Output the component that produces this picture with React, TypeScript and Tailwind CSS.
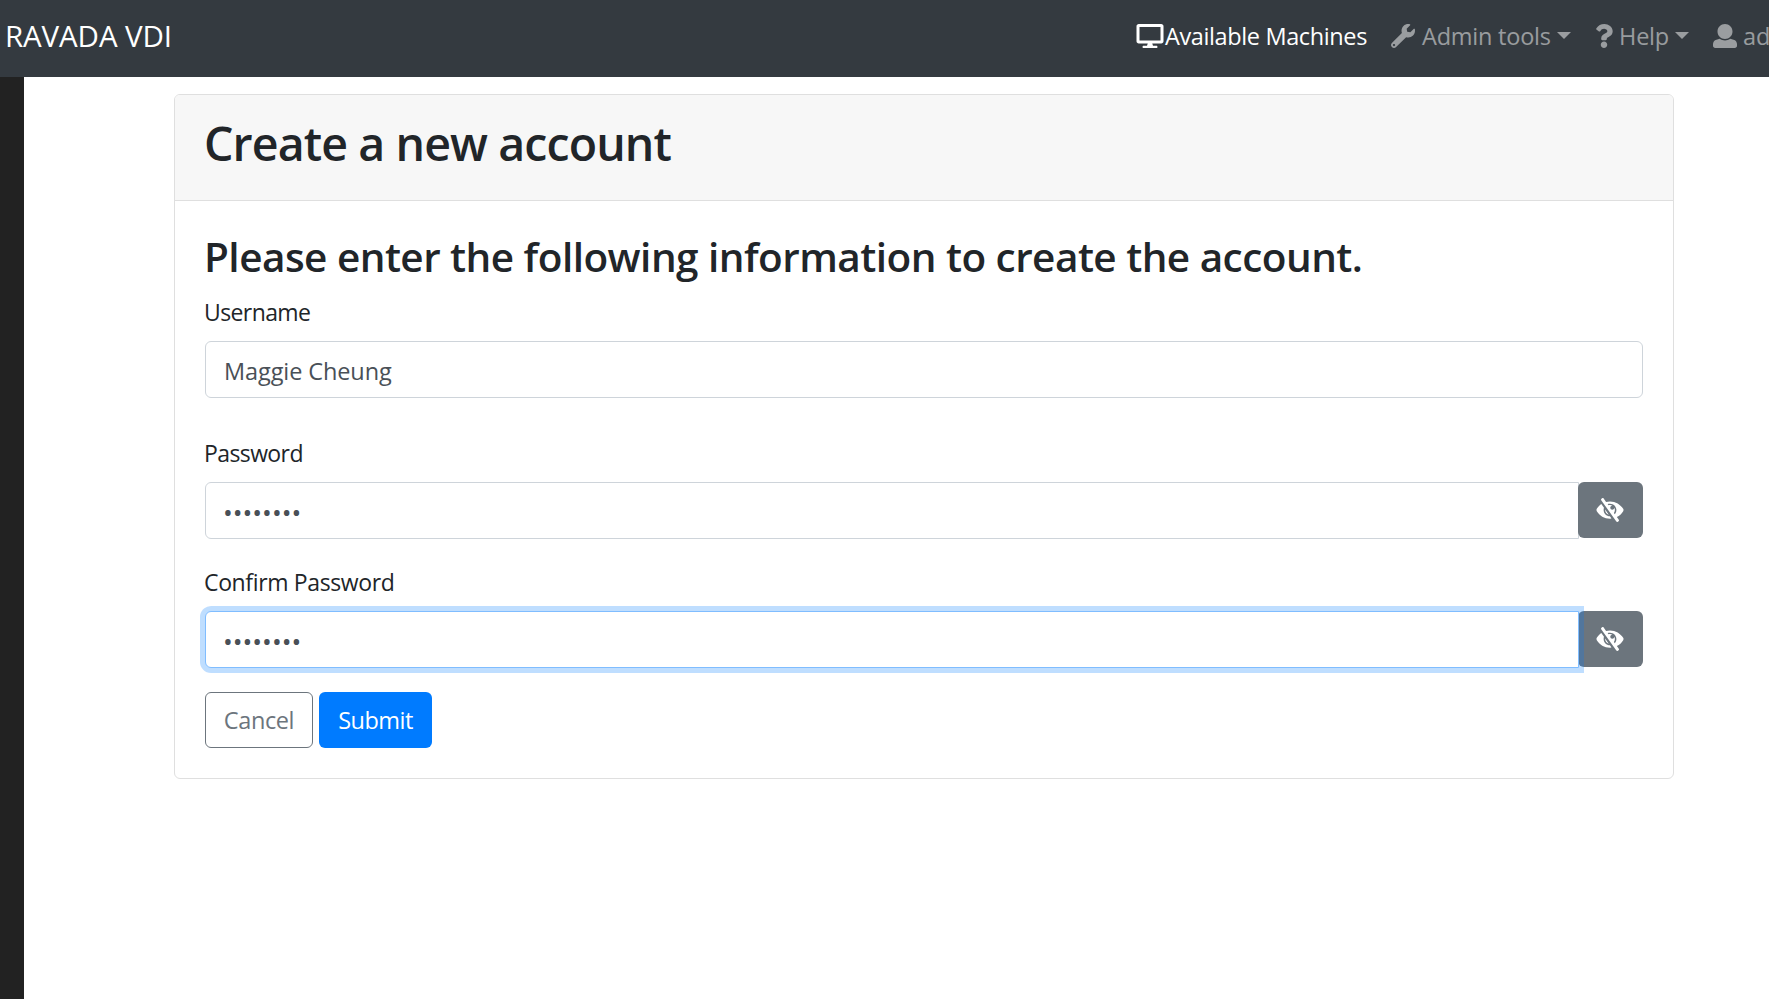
import { FaDesktop, FaQuestion, FaWrench } from "react-icons/fa";

function UserIcon() {
  return (
    <svg viewBox="0 0 512 512" className="size-6 shrink-0 fill-current">
      <path d="M256 0c88.366 0 160 71.634 160 160s-71.634 160-160 160S96 248.366 96 160 167.634 0 256 0zm183.283 333.821l-71.313-17.828c-74.923 53.89-165.738 41.864-223.94 0l-71.313 17.828C29.981 344.505 0 382.903 0 426.955V464c0 26.51 21.49 48 48 48h416c26.51 0 48-21.49 48-48v-37.045c0-44.052-29.981-82.45-72.717-93.134z" />
    </svg>
  );
}

function EyeSlashIcon() {
  return (
    <svg viewBox="0 0 576 512" className="mr-px h-6 w-7 shrink-0 fill-current">
      <path d="M286.693 391.984l32.579 46.542A333.958 333.958 0 0 1 288 440C168.19 440 63.445 376.282 6.646 280.369a47.999 47.999 0 0 1 0-48.739c24.023-40.766 56.913-75.775 96.024-102.537l57.077 81.539C154.736 224.82 152 240.087 152 256c0 74.736 60.135 135.282 134.693 135.984zm282.661-111.615c-31.667 53.737-78.747 97.46-135.175 125.475l.011.015 41.47 59.2c7.6 10.86 4.96 25.82-5.9 33.42l-13.11 9.18c-10.86 7.6-25.82 4.96-33.42-5.9L100.34 46.94c-7.6-10.86-4.96-25.82 5.9-33.42l13.11-9.18c10.86-7.6 25.82-4.96 33.42 5.9l51.038 72.617C230.68 75.776 258.905 72 288 72c119.81 0 224.555 63.718 281.354 159.631a48.002 48.002 0 0 1 0 48.738zM424 256c0-75.174-60.838-136-136-136-17.939 0-35.056 3.473-50.729 9.772l19.299 27.058c25.869-8.171 55.044-6.163 80.4 7.41h-.03c-23.65 0-42.82 19.17-42.82 42.82 0 23.626 19.147 42.82 42.82 42.82 23.65 0 42.82-19.17 42.82-42.82v-.03c18.462 34.49 16.312 77.914-8.25 110.95v.01l19.314 27.061C411.496 321.2 424 290.074 424 256zM262.014 356.727l-77.53-110.757c-5.014 52.387 29.314 98.354 77.53 110.757z" />
    </svg>
  );
}

function Caret() {
  return (
    <span className="mt-[-2px] h-0 w-0 shrink-0 border-x-[7px] border-t-[7px] border-x-transparent border-t-current" />
  );
}

function PasswordRow({ focused = false, label }: { focused?: boolean; label: string }) {
  return (
    <div className="flex h-[57px]">
      <input
        type="text"
        readOnly
        aria-label={label}
        value="••••••••"
        className={
          focused
            ? "relative z-10 w-[1374px] rounded-l-md border border-[#80bdff] bg-white px-[17px] pt-[3px] text-[26px] text-[#495057] shadow-[0_0_0_5px_rgba(0,123,255,0.25)] outline-none"
            : "w-[1374px] rounded-l-md border border-[#ced4da] bg-white px-[17px] pt-[3px] text-[26px] text-[#495057] outline-none"
        }
      />
      <button className="-ml-px flex h-14 w-[65px] items-center justify-center rounded-md bg-[#6c757d] text-white">
        <EyeSlashIcon />
      </button>
    </div>
  );
}

export default function App() {
  return (
    <div className="flex h-[999px] w-[1769px] flex-col overflow-hidden bg-white font-['Open_Sans','Noto_Sans',sans-serif] text-[23.5px] text-[#212529]">
      <nav className="flex h-[77px] shrink-0 items-center bg-[#343a40] pb-[5px] text-white/50">
        <span className="ml-[5px] w-[1131px] shrink-0 text-[29.5px] tracking-[-0.12px] whitespace-nowrap text-white">
          RAVADA VDI
        </span>
        <div className="flex w-[255px] shrink-0 items-center text-white">
          <FaDesktop className="h-6 w-7 shrink-0" />
          <span className="ml-px pt-0.5 tracking-[-0.38px] whitespace-nowrap">Available Machines</span>
        </div>
        <div className="flex w-[204px] shrink-0 items-center">
          <FaWrench className="size-6 shrink-0" />
          <span className="ml-[7px] w-[135px] pt-0.5 tracking-[-0.22px] whitespace-nowrap">Admin tools</span>
          <Caret />
        </div>
        <div className="flex w-[118px] shrink-0 items-center">
          <FaQuestion className="h-6 w-[18px] shrink-0" />
          <span className="ml-1.5 w-14 pt-0.5 tracking-[-0.2px] whitespace-nowrap">Help</span>
          <Caret />
        </div>
        <div className="flex shrink-0 items-center">
          <UserIcon />
          <span className="ml-[6px] pt-0.5 whitespace-nowrap">ad</span>
        </div>
      </nav>
      <div className="flex flex-1">
        <aside className="w-6 shrink-0 bg-[#222]" />
        <main className="ml-[150px] pt-[17px]">
          <section className="h-[685px] w-[1500px] overflow-hidden rounded-md border border-[#dfdfdf] bg-white">
            <header className="h-[106px] border-b border-[#dfdfdf] bg-[#f7f7f7] px-[29px] pt-[19px]">
              <h1 className="text-[46.5px] leading-[58px] font-[550] tracking-[-0.9px] whitespace-nowrap">
                Create a new account
              </h1>
            </header>
            <div className="px-[30px] pt-[31px]">
              <h2 className="-ml-px h-[62px] text-[40.5px] leading-[50px] font-[550] tracking-[-0.53px] whitespace-nowrap">
                Please enter the following information to create the account.
              </h2>
              <label className="-ml-px block h-9 text-[23px] leading-9 tracking-[-0.6px]">Username</label>
              <input
                type="text"
                readOnly
                value="Maggie Cheung"
                className="mt-[11px] mb-[37px] block h-[57px] w-[1438px] rounded-md border border-[#ced4da] bg-white px-[18px] pt-[3px] tracking-[-0.1px] text-[#495057] outline-none"
              />
              <label className="mb-[11px] -ml-px block h-9 text-[23px] leading-9 tracking-[-0.6px]">Password</label>
              <PasswordRow label="Password" />
              <label className="mt-[25px] mb-[11px] -ml-px block h-9 text-[23px] leading-9 tracking-[-0.36px]">
                Confirm Password
              </label>
              <PasswordRow label="Confirm Password" focused />
              <div className="mt-6 flex gap-1.5">
                <button className="h-14 w-[108px] rounded-md border border-[#6c757d] pt-0.5 tracking-[-0.4px] text-[#6c757d]">
                  Cancel
                </button>
                <button className="h-14 w-[113px] rounded-md bg-[#007bff] pt-0.5 tracking-[-0.5px] text-white">
                  Submit
                </button>
              </div>
            </div>
          </section>
        </main>
      </div>
    </div>
  );
}
